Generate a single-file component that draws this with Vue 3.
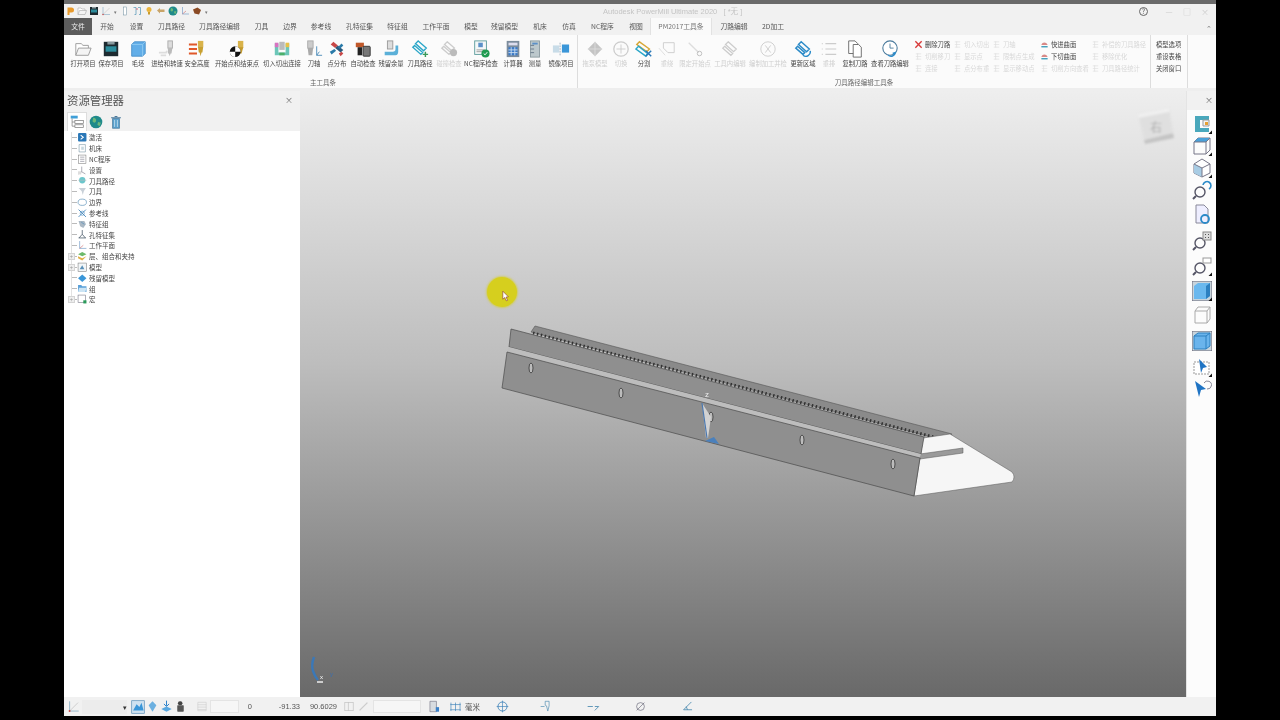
<script setup>
const corner = `<path d="M20 20v-3.5L16.5 20z" fill="#111"/>`;
const icons = {
  open: `<path d="M2 17V4h6l2 2h6v3" fill="#fff" stroke="#999"/><path d="M2 17l3-8h14l-3 8z" fill="#f4f4f4" stroke="#999"/>`,
  save: `<rect x="2" y="2" width="16" height="16" fill="#1d2a30"/><rect x="4" y="7" width="12" height="6" fill="#2c8c9c"/><rect x="6" y="2" width="8" height="3" fill="#8a9a9f"/>`,
  stock: `<path d="M3 5l3-3h12v13l-3 3H3z" fill="#62aee8" stroke="#4a90c8"/><path d="M3 5h12v13M15 5l3-3" fill="none" stroke="#8cc8f0"/>`,
  feed: `<rect x="11" y="1" width="5" height="8" fill="#ddd" stroke="#aaa"/><path d="M11 9h5l-1 6h-1l-1 3-1-3h-1z" fill="#bbb"/><path d="M1 14h8l1-2M3 17h6" stroke="#ddd" stroke-width="2" fill="none"/>`,
  rapid: `<rect x="11" y="1" width="6" height="6" fill="#d9b34a"/><path d="M11 7h6l-1 7h-1l-1 4-1-4h-1z" fill="#c8a030"/><path d="M1 5h9M1 10h9M1 15h9" stroke="#e0582a" stroke-width="2"/>`,
  start: `<rect x="11" y="1" width="6" height="8" fill="#d9b34a"/><path d="M11 8h6l-2 7h-2z" fill="#c49a2c"/><circle cx="8" cy="13" r="6" fill="#111"/><path d="M8 7a6 6 0 0 1 6 6H8zM8 13v6a6 6 0 0 1-6-6z" fill="#fff"/>`,
  lead: `<path d="M2 4h4v10h8V4h4v13H2z" fill="#6cc6b8"/><path d="M2 3h4v5H2z" fill="#d873c0"/><path d="M14 3h4v5h-4z" fill="#e8c048"/><rect x="7" y="2" width="6" height="9" fill="#bbb"/><path d="M7 14h6v3H7z" fill="#4caf6a"/>`,
  axis: `<rect x="3" y="1" width="6" height="8" fill="#ccc" stroke="#aaa"/><path d="M3 9h6l-1 8H4z" fill="#aaa"/><path d="M13 7v10h6M13 17l3-4" stroke="#4a8ab8" fill="none"/>`,
  dots: `<path d="M3 5l3-3 5 4-3 3z" fill="#c84848"/><path d="M8 9l3-3 6 5-3 3z" fill="#2c5a7c"/><path d="M2 13l5-3 2 2-5 4z" fill="#2a7aa8"/><path d="M11 8l4-4 2 2-4 4z" fill="#2a7aa8"/><path d="M12 15l3-2 2 2-3 3z" fill="#c84848"/>`,
  check: `<rect x="2" y="3" width="9" height="5" fill="#c0582a"/><path d="M4 8h5v9H4z" fill="#222"/><rect x="10" y="7" width="8" height="11" rx="1" fill="#777" stroke="#333"/>`,
  stockleft: `<path d="M3 13h9c2 0 3-1 3-3V6h3v7c0 2-1 4-3 4H3z" fill="#5bb0d8"/><rect x="6" y="1" width="6" height="9" fill="#ddd" stroke="#999"/>`,
  path: `<path d="M8 1l9 8-3 3-9-8zM4 6l9 8-2 2-9-8z" fill="none" stroke="#2aa6c8" stroke-width="1.5"/><path d="M16 13v6M13 16h6" stroke="#3a9a5a" stroke-width="1.6"/>`,
  coll: `<path d="M8 2l8 7-3 3-8-7zM4 7l8 7-2 2-8-7z" fill="none" stroke="#ccc" stroke-width="1.5"/><circle cx="15" cy="14" r="4" fill="#bbb"/>`,
  nc: `<rect x="3" y="1" width="13" height="15" fill="#f4f8f8" stroke="#5a9a9a"/><rect x="7" y="3" width="5" height="5" fill="#5a90c8"/><path d="M5 11h9M5 13h7" stroke="#999"/><circle cx="15" cy="15" r="4.5" fill="#1f9a50"/><path d="M13 15l1.5 1.5 2.5-3" stroke="#fff" fill="none"/>`,
  calc: `<rect x="3" y="1" width="14" height="18" fill="#7c8c9c"/><rect x="5" y="3" width="10" height="3" fill="#dde"/><path d="M5 8h10v9H5z" fill="#3a7ac8"/><path d="M8 8v9M12 8v9M5 11h10M5 14h10" stroke="#cde"/>`,
  measure: `<rect x="5" y="1" width="10" height="18" fill="#bcc8cc" stroke="#8a9a9f"/><path d="M5 6h4M5 10h4M5 14h4" stroke="#678"/><rect x="7" y="3" width="6" height="2" fill="#5a90c8"/>`,
  mirror: `<rect x="1" y="6" width="7" height="8" fill="#c8dce8"/><rect x="11" y="5" width="8" height="9" fill="#3a96d8"/><path d="M9 3v14" stroke="#9ab" stroke-dasharray="2 1"/>`,
  drag: `<path d="M10 2l8 8-8 8-8-8z" fill="#c4c4c4"/><path d="M10 2v16M2 10h16" stroke="#ddd"/>`,
  toggle: `<circle cx="10" cy="10" r="8" fill="none" stroke="#ccc" stroke-width="1.4"/><path d="M10 5v10M5 10h10" stroke="#ccc"/>`,
  split: `<path d="M5 2l11 8-3 3L2 5z" fill="none" stroke="#d8a838" stroke-width="1.6"/><path d="M4 7l10 8-2 3L1 10z" fill="none" stroke="#2aa6c8" stroke-width="1.6"/><path d="M12 12l6 6M18 12l-6 6" stroke="#2a78b8" stroke-width="1.6"/>`,
  rewind: `<path d="M6 3h12v11H11l-5-5z" fill="none" stroke="#ccc"/><path d="M1 9l7 8" stroke="#ddd"/>`,
  limit: `<path d="M3 3l11 11" stroke="#ddd" stroke-width="1.5"/><circle cx="15" cy="15" r="2.5" fill="none" stroke="#bbb"/>`,
  inner: `<path d="M8 2l9 8-3 3-9-8zM4 7l9 8-2 2-9-8z" fill="none" stroke="#ccc" stroke-width="1.4"/>`,
  batch: `<circle cx="10" cy="10" r="8" fill="none" stroke="#ccc"/><path d="M7 6l6 8M13 6l-6 8" stroke="#ccc"/>`,
  update: `<path d="M8 2l9 8-3 3-9-8zM4 7l8 7-2 2-8-7z" fill="none" stroke="#2a8ac8" stroke-width="1.6"/><path d="M10 17a5 5 0 0 0 8-5" stroke="#2a8ac8" stroke-width="1.6" fill="none"/>`,
  reorder: `<path d="M2 4h1M6 4h12M2 10h1M6 10h12M2 16h1M6 16h12" stroke="#ccc" stroke-width="1.3"/>`,
  copy: `<path d="M3 1h7l3 3v11H3z" fill="#fff" stroke="#666"/><path d="M8 5h6l3 3v11H8z" fill="#fff" stroke="#666"/>`,
  view: `<circle cx="10" cy="9" r="8" fill="#fff" stroke="#4a7a9c" stroke-width="1.2"/><path d="M10 4v5h4" stroke="#4a7a9c" fill="none"/><path d="M8 17a5 5 0 0 0 8-3l-3 1" stroke="#2a8ac8" stroke-width="1.6" fill="none"/>`,
  redx: `<path d="M3 3l14 14M17 3L3 17" stroke="#d83a3a" stroke-width="3"/>`,
  faint: `<path d="M4 4h12M4 10h12M4 16h12M8 3v14" fill="none" stroke="#ddd" stroke-width="1.4"/>`,
  surf: `<path d="M3 11c3-7 10-7 14 0z" fill="#d88a88"/><path d="M3 15h14" stroke="#3a9ab8" stroke-width="3"/>`,
  tree: `<rect x="1" y="1" width="10" height="4" fill="#3f9fd8"/><rect x="7" y="8" width="12" height="4" fill="#fff" stroke="#777"/><rect x="7" y="14" width="12" height="4" fill="#fff" stroke="#777"/><path d="M3 5v11h4M3 10h4" stroke="#777" fill="none"/>`,
  globe: `<circle cx="10" cy="10" r="9" fill="#1f8a8a"/><path d="M6 4c3 0 5 2 4 5s-4 2-5 0M13 10l4 1-2 5-3-2z" fill="#6cb87a"/>`,
  trash: `<path d="M5 5h10v14H5z" fill="#5aa0cc" stroke="#4a7a9c"/><path d="M3 4h14M8 2h4" stroke="#4a7a9c" stroke-width="1.5"/><path d="M8 7v10M12 7v10" stroke="#d8ecf8"/>`,
  activate: `<rect x="2" y="2" width="16" height="16" rx="2" fill="#2a78b8"/><path d="M7 6l5 4-5 4" stroke="#fff" stroke-width="2" fill="none"/>`,
  machine: `<path d="M4 3h12v14H4z" fill="#fff" stroke="#6a8a9c"/><path d="M8 7h5v6H8z" fill="#c8d8e0"/>`,
  ncdoc: `<rect x="3" y="2" width="14" height="16" fill="#fff" stroke="#777"/><path d="M6 6h8M6 10h8M6 14h8" stroke="#667"/>`,
  setup: `<path d="M9 3v10l7 4M9 13L3 17" stroke="#667" fill="none"/><rect x="2" y="12" width="6" height="6" fill="#ddd"/>`,
  tp: `<circle cx="10" cy="10" r="6" fill="#6cc6cc"/><path d="M2 10h16" stroke="#bbb"/>`,
  tool: `<path d="M3 4h14l-4 6-2 7-2-7z" fill="#c8d0d8"/>`,
  bound: `<ellipse cx="10" cy="10" rx="8" ry="6" fill="#fff" stroke="#5a90b8" stroke-width="1.3"/>`,
  ref: `<path d="M3 3l14 14M17 3L3 17" stroke="#3a80b8" stroke-width="1.6"/><circle cx="10" cy="10" r="4" fill="none" stroke="#3a80b8"/>`,
  feat: `<path d="M3 4h11l3 6-5 7-6-3z" fill="#aab8c4"/><path d="M8 6l6 4" stroke="#3a80b8"/>`,
  hole: `<path d="M10 2v8M3 17h14M4 17l6-7 6 7" stroke="#4a5a6a" stroke-width="1.5" fill="none"/>`,
  plane: `<path d="M5 2v14h13" stroke="#4a80b8" fill="none"/><path d="M5 16l7-6" stroke="#c85050"/>`,
  layer: `<path d="M10 2l8 4-8 4-8-4z" fill="#6cba6a"/><path d="M2 10l8 4 8-4-8 8-8-4z" fill="#e0b048"/>`,
  model: `<rect x="2" y="2" width="16" height="16" fill="#f2f6f8" stroke="#777"/><path d="M5 14l5-8 4 8z" fill="#5a90b8"/>`,
  rest: `<path d="M10 3l8 7-8 7-8-7z" fill="#3a96d8"/>`,
  group: `<path d="M2 4h6l2 2h8v11H2z" fill="#5aa0d8"/><path d="M4 9h14l-2 8H2z" fill="#cce4f4"/>`,
  macro: `<rect x="2" y="2" width="14" height="14" fill="#fff" stroke="#667"/><rect x="12" y="12" width="6" height="6" fill="#2a9a5a"/>`,
  wp: `<path d="M4 2v15h14" stroke="#6a9ab8" fill="none"/><path d="M4 17L17 4" stroke="#bbb"/><circle cx="4" cy="17" r="1.5" fill="#c84848"/>`,
  shade: `<rect x="1" y="1" width="18" height="18" fill="#cfe2f0" stroke="#5a90b8"/><path d="M3 15l5-9 4 4 3-6 3 11z" fill="#3a96d8"/>`,
  cut: `<path d="M10 2l6 6-6 10-6-10z" fill="#6cb0e0"/>`,
  drop: `<path d="M10 1v8M6 6l4 4 4-4" stroke="#2a80c8" fill="none" stroke-width="1.5"/><path d="M2 14l8-4 8 4-8 4z" fill="#5aa8e0"/>`,
  bolt: `<rect x="6" y="2" width="7" height="6" rx="3" fill="#444"/><rect x="5" y="8" width="10" height="10" rx="1" fill="#555"/>`,
  listfaint: `<path d="M3 3h14v14H3zM3 7h14M3 11h14M3 15h14" stroke="#ccc" fill="none"/>`,
  boxfaint: `<rect x="3" y="3" width="14" height="14" fill="none" stroke="#bbb"/><path d="M9 3v14" stroke="#bbb"/>`,
  pen: `<path d="M4 16L16 4" stroke="#ccc" stroke-width="2"/>`,
  doc: `<path d="M3 2h10v16H3z" fill="#d8dce0" stroke="#778"/><path d="M12 11h5v7h-5z" fill="#3a80c8"/>`,
  grid: `<path d="M2 7h16M2 15h16M3 4v13M10 4v13M17 4v13" stroke="#3a80b8" fill="none"/>`,
  target: `<circle cx="10" cy="10" r="7" fill="none" stroke="#3a80b8" stroke-width="1.3"/><path d="M10 1v18M1 10h18" stroke="#3a80b8"/>`,
  ntool: `<path d="M8 2h6v7l-2 8-2-8-2-1zM1 10h6" stroke="#4a8ab0" fill="none"/>`,
  radius: `<path d="M1 10h8M12 10h6l-6 6" stroke="#4a8ab0" fill="none" stroke-width="1.3"/>`,
  dia: `<circle cx="10" cy="10" r="6" fill="none" stroke="#667"/><path d="M4 16L16 4" stroke="#667"/>`,
  angle: `<path d="M16 3L4 15h13M10 15l-2-5" stroke="#4a8ab0" fill="none" stroke-width="1.3"/>`,
  // right hand toolbar
  frame: `<path d="M3 2h14v4H8v8h9v4H3z" fill="#4aa8bc"/><path d="M11 6h6v6h-6z" fill="#f4f4f4" stroke="#999"/><path d="M13 8h3v3h-3z" fill="#e8a030"/>${corner}`,
  topview: `<path d="M2 6l4-4h12v12l-4 4H2z" fill="none" stroke="#778"/><path d="M2 6l4-4h12l-4 4z" fill="#4aa0d8"/><path d="M2 6h12v12M14 6l4-4" fill="none" stroke="#778"/>${corner}`,
  iso: `<path d="M10 1l8 5v9l-8 4-8-4V6z" fill="#fff" stroke="#778"/><path d="M2 6l8 4v9l-8-4z" fill="#a8cce4"/><path d="M2 6l8 4 8-4M10 10v9" fill="none" stroke="#778"/>${corner}`,
  zoomfit: `<circle cx="8" cy="12" r="5" fill="none" stroke="#556" stroke-width="1.4"/><path d="M4 16l-3 3" stroke="#556" stroke-width="2"/><path d="M11 5a4 4 0 1 1 6 4" stroke="#2a8ac8" stroke-width="1.6" fill="none"/>`,
  docref: `<path d="M4 1h8l4 4v14H4z" fill="#eef" stroke="#889"/><circle cx="13" cy="15" r="4" fill="none" stroke="#2a8ac8" stroke-width="1.8"/>`,
  zoomgrid: `<circle cx="8" cy="12" r="5" fill="none" stroke="#556" stroke-width="1.4"/><path d="M4 16l-3 3" stroke="#556" stroke-width="2"/><rect x="11" y="1" width="8" height="8" fill="#ddd" stroke="#888"/><path d="M13 3h1v1h-1zM16 3h1v1h-1zM13 6h1v1h-1zM16 6h1v1h-1z" fill="#555"/>`,
  zoombox: `<circle cx="8" cy="12" r="5" fill="none" stroke="#556" stroke-width="1.4"/><path d="M4 16l-3 3" stroke="#556" stroke-width="2"/><rect x="11" y="2" width="8" height="5" fill="#fff" stroke="#999"/>${corner}`,
  solid: `<rect x="0" y="0" width="20" height="20" fill="#c8d4dc" stroke="#667"/><path d="M2 5l4-3h12v13l-4 3H2z" fill="#6ab8ee"/><path d="M14 5l4-3v13l-4 3z" fill="#2c80c0"/>${corner}`,
  wire2: `<path d="M3 6l3-4h12v12l-3 4H3z" fill="none" stroke="#aaa"/><path d="M3 6h12v12M15 6l3-4" fill="none" stroke="#aaa"/>`,
  trans: `<rect x="0" y="0" width="20" height="20" fill="#c8d4dc" stroke="#667"/><path d="M2 5l4-3h12v13l-4 3H2z" fill="#6ab4ec" stroke="#2c80c0"/><path d="M2 5h12v13M14 5l4-3" stroke="#2c80c0" fill="none"/>`,
  selbox: `<rect x="2" y="5" width="15" height="12" fill="#fff" stroke="#999" stroke-dasharray="2 1"/><path d="M7 2l8 8-4 1-2 5z" fill="#1f74c4"/>${corner}`,
  selundo: `<path d="M3 3l11 8-5 1-2 7z" fill="#1f74c4"/><path d="M12 5a4 4 0 1 1 3 6" stroke="#889" fill="none"/>`,
  // quick access only
  bulb: `<circle cx="10" cy="7" r="5" fill="#eab43c"/><rect x="8" y="12" width="4" height="5" fill="#c89a2c"/>`,
  undo: `<path d="M2 9l6-5v3h9v5H8v3z" fill="#c8a468"/>`,
  brown: `<path d="M2 7l9-4 7 5-4 9-9-2z" fill="#8a4a24"/>`,
  thin: `<rect x="7" y="2" width="6" height="16" fill="#fff" stroke="#6a8a9c"/>`,
  twin: `<path d="M3 3h5v14H5M12 3h5v14h-3" stroke="#5a9ab8" stroke-width="1.5" fill="none"/><path d="M8 6h4" stroke="#d06a7a" stroke-width="2"/>`,
};
const quick = ["open", "save", "wp", "dot", "thin", "twin", "bulb", "undo", "globe", "plane", "brown", "dot"];
const tabs = [
  ["文件", 28], ["开始", 30], ["设置", 29], ["刀具路径", 41], ["刀具路径编辑", 55], ["刀具", 29], ["边界", 28],
  ["参考线", 34], ["孔特征集", 43], ["特征组", 33], ["工作平面", 44], ["模型", 26], ["残留模型", 41],
  ["机床", 30], ["仿真", 28], ["NC程序", 39], ["视图", 28], ["PM2017工具条", 62], ["刀路编辑", 44], ["2D加工", 34],
];
const mainTools = [
  ["open", "打开项目", 28], ["save", "保存项目", 28], ["stock", "毛坯", 26], ["feed", "进给和转速", 32],
  ["rapid", "安全高度", 28], ["start", "开始点和结束点", 52], ["lead", "切入切出连接", 38], ["axis", "刀轴", 26],
  ["dots", "点分布", 20], ["check", "自动检查", 32], ["stockleft", "残留余量", 24], ["path", "刀具路径", 34],
  ["coll", "碰撞检查", 24, true], ["nc", "NC程序检查", 40], ["calc", "计算器", 24], ["measure", "测量", 20], ["mirror", "镜像项目", 32],
];
const editTools = [
  ["drag", "拖泵模型", 34, true], ["toggle", "切换", 18, true], ["split", "分割", 28], ["rewind", "重绕", 18, true], ["limit", "限定开始点", 38, true],
  ["inner", "工具内编辑", 32, true], ["batch", "编制加工并检", 44, true], ["update", "更新区域", 26], ["reorder", "重排", 26, true],
  ["copy", "复制刀路", 26], ["view", "查看刀路编辑", 44],
];
const smallTools = [
  ["redx", "删除刀路"], ["faint", "切入切出", true], ["faint", "刀轴", true], ["surf", "快进曲面"], ["faint", "补偿的刀具路径", true],
  ["faint", "切削移刀", true], ["faint", "显示点", true], ["faint", "限制点生成", true], ["surf", "下切曲面"], ["faint", "移除优化", true],
  ["faint", "连接", true], ["faint", "点分布重", true], ["faint", "显示移动点", true], ["faint", "切削方向查看", true], ["faint", "刀具路径统计", true],
];
const extras = ["模型选项", "重设表格", "关闭窗口"];
const treeRows = [
  ["activate", "激活"], ["machine", "机床"], ["ncdoc", "NC程序"], ["setup", "设置"], ["tp", "刀具路径"], ["tool", "刀具"],
  ["bound", "边界"], ["ref", "参考线"], ["feat", "特征组"], ["hole", "孔特征集"], ["plane", "工作平面"],
  ["layer", "层、组合和夹持", true], ["model", "模型", true], ["rest", "残留模型"], ["group", "组"], ["macro", "宏", true],
];
const sideIcons = [
  ["frame", 0], ["topview", 22], ["iso", 22], ["zoomfit", 22], ["docref", 24], ["zoomgrid", 27], ["zoombox", 25],
  ["solid", 25], ["wire2", 24], ["trans", 26], ["selbox", 26], ["selundo", 21],
];
// status bar, left to right: kind, value, width
const statusItems = [
  ["i", "wp", 18], ["combo", "", 45], ["s", "", 4], ["i", "shade", 14, true], ["i", "cut", 14], ["i", "drop", 14], ["i", "bolt", 14],
  ["s", "", 9], ["i", "listfaint", 12], ["s", "", 2], ["box", "", 29], ["t", "0", 13], ["t", "-91.33", 48], ["t", "90.6029", 37],
  ["s", "", 6], ["i", "boxfaint", 12], ["s", "", 2], ["i", "pen", 13], ["s", "", 3], ["box", "", 48], ["s", "", 6],
  ["i", "doc", 14], ["s", "", 7], ["i", "grid", 14], ["t", "毫米", 18], ["s", "", 15], ["i", "target", 14],
  ["s", "", 30], ["i", "ntool", 14], ["s", "", 33], ["i", "radius", 14], ["s", "", 33], ["i", "dia", 14], ["s", "", 33], ["i", "angle", 14],
];
const holes = [[531, 368], [621, 393], [711, 417], [802, 440], [893, 464]];
</script>

<template>
  <div class="stage">
    <div class="window">
      <div class="titlebar">
        <div class="quick">
          <svg class="qi" viewBox="0 0 20 20"><path d="M5 3h8a5 5 0 0 1 0 10H9v5H5z" fill="#e89a2c" /></svg>
          <template v-for="(q, i) in quick" :key="i">
            <span v-if="q === 'dot'" class="qdot">▾</span>
            <svg v-else class="qi" viewBox="0 0 20 20" v-html="icons[q]"></svg>
          </template>
        </div>
        <div class="apptitle">Autodesk PowerMill Ultimate 2020 &nbsp; [ *无 ]</div>
        <div class="winbtns">
          <span class="help">?</span><span class="wb">—</span><span class="wb">□</span><span class="wb">×</span>
        </div>
      </div>

      <div class="tabs">
        <div
          v-for="(t, i) in tabs"
          :key="t[0]"
          class="tab"
          :class="{ file: i === 0, active: t[0] === 'PM2017工具条' }"
          :style="{ width: t[1] + 'px' }"
        >{{ t[0] }}</div>
        <span class="collapse">⌃</span>
      </div>

      <div class="ribbon">
        <div class="group main-group">
          <div class="tools">
            <div v-for="t in mainTools" :key="t[1]" class="tool" :class="{ off: t[3] }" :style="{ width: t[2] + 'px' }">
              <svg class="bigicon" viewBox="0 0 20 20" v-html="icons[t[0]]"></svg>
              <span>{{ t[1] }}</span>
            </div>
          </div>
          <div class="grouplabel">主工具条</div>
        </div>
        <div class="group edit-group">
          <div class="tools">
            <div v-for="t in editTools" :key="t[1]" class="tool" :class="{ off: t[3] }" :style="{ width: t[2] + 'px' }">
              <svg class="bigicon" viewBox="0 0 20 20" v-html="icons[t[0]]"></svg>
              <span>{{ t[1] }}</span>
            </div>
            <div class="smallgrid">
              <div v-for="s in smallTools" :key="s[1]" class="small" :class="{ off: s[2] }">
                <svg class="smallicon" viewBox="0 0 20 20" v-html="icons[s[0]]"></svg>
                <span>{{ s[1] }}</span>
              </div>
            </div>
          </div>
          <div class="grouplabel">刀具路径编辑工具条</div>
        </div>
        <div class="group extra-group">
          <div v-for="e in extras" :key="e" class="extra">{{ e }}</div>
        </div>
      </div>

      <div class="workarea">
        <aside class="explorer">
          <div class="panelhead">
            <span class="paneltitle">资源管理器</span>
            <span class="close">×</span>
          </div>
          <div class="paneltabs">
            <div class="ptab on"><svg viewBox="0 0 20 20" v-html="icons.tree"></svg></div>
            <div class="ptab"><svg viewBox="0 0 20 20" v-html="icons.globe"></svg></div>
            <div class="ptab"><svg viewBox="0 0 20 20" v-html="icons.trash"></svg></div>
          </div>
          <ul class="tree">
            <li v-for="(r, i) in treeRows" :key="r[1]" class="row">
              <span class="branch" :class="{ last: i === treeRows.length - 1 }">
                <i v-if="r[2]" class="plus">+</i>
              </span>
              <svg class="rowicon" viewBox="0 0 20 20" v-html="icons[r[0]]"></svg>
              <span class="rowlabel">{{ r[1] }}</span>
            </li>
          </ul>
        </aside>

        <main class="viewport">
          <svg class="scene" viewBox="300 91 886 606">
            <!-- view cube -->
            <g class="cube">
              <path d="M1144 140l29-7 1 5-29 6z" fill="#c4c4c4" />
              <path d="M1138 114l31-6 4 25-29 7z" fill="#dfdfdf" />
              <path d="M1138 114l31-6 .6 4-31 6z" fill="#efefef" />
              <text x="1150" y="132" class="cubetext">右</text>
            </g>
            <!-- rail on top -->
            <path d="M535 326L952 434 947 441 531 332z" fill="#8a8a8a" stroke="#555" stroke-width=".6" />
            <path d="M533 333L945 440" stroke="#333" stroke-width="3" stroke-dasharray="1.5 2.5" fill="none" />
            <!-- white end -->
            <path d="M923 438L950 434 1012 472Q1016 477 1012 482L914 496 920 458z" fill="#f6f6f6" stroke="#555" stroke-width=".5" />
            <path d="M920 454L963 448 963 453 920 459z" fill="#9a9a9a" stroke="#555" stroke-width=".5" />
            <!-- upper face -->
            <path d="M511 329L924 437 921 454 509 347z" fill="#8f8f8f" stroke="#4a4a4a" stroke-width=".7" />
            <!-- light strip -->
            <path d="M509 347L921 454 920 458 507 352z" fill="#bdbdbd" />
            <!-- lower face -->
            <path d="M507 352L920 458 914 496 502 388z" fill="#8f8f8f" stroke="#4a4a4a" stroke-width=".7" />
            <ellipse v-for="h in holes" :key="h[0]" :cx="h[0]" :cy="h[1]" rx="2" ry="5" fill="#bcbcbc" stroke="#333" stroke-width=".8" />
            <!-- tool triad -->
            <path d="M702 403L711 417 708 438 706 438z" fill="#d2d2d2" />
            <path d="M702 403L707 438" stroke="#4a78b0" stroke-width="1.2" />
            <path d="M705 441L714 437 719 444z" fill="#4a80bc" />
            <text x="705" y="397" class="ztext">z</text>
            <!-- small axes -->
            <path d="M314 657Q311 665 313 671T318 680" stroke="#3a78b8" stroke-width="2.4" fill="none" />
            <path d="M317 682h6" stroke="#eee" stroke-width="1.5" />
            <text x="320" y="679" class="xtext">x</text>
            <text x="330" y="676" class="ytext">y</text>
          </svg>
          <div class="spot"></div>
          <svg class="pointer" viewBox="0 0 10 14"><path d="M1 1l7 7-3 .4 2 4-1.6.6-2-4L1 11z" fill="#fff" stroke="#8a4030" stroke-width=".8" /></svg>
        </main>

        <aside class="sidebar">
          <div class="sidehead"><span class="close">×</span></div>
          <div class="sideicons">
            <svg v-for="s in sideIcons" :key="s[0]" class="sideicon" :style="{ marginTop: s[1] - 20 + 'px' }" viewBox="0 0 20 20" v-html="icons[s[0]]"></svg>
          </div>
        </aside>
      </div>

      <footer class="status">
        <template v-for="(s, i) in statusItems" :key="i">
          <div v-if="s[0] === 's'" :style="{ width: s[2] + 'px' }"></div>
          <div v-else-if="s[0] === 'i'" class="sticon" :class="{ sel: s[3] }" :style="{ width: s[2] + 'px' }">
            <svg viewBox="0 0 20 20" v-html="icons[s[1]]"></svg>
          </div>
          <div v-else-if="s[0] === 'combo'" class="combo" :style="{ width: s[2] + 'px' }"><span>▾</span></div>
          <div v-else-if="s[0] === 'box'" class="stbox" :style="{ width: s[2] + 'px' }"></div>
          <div v-else class="sttext" :style="{ width: s[2] + 'px' }">{{ s[1] }}</div>
        </template>
      </footer>
    </div>
  </div>
</template>

<style>
html, body { margin: 0; background: #000; overflow: hidden; }
</style>

<style scoped>
.stage {
  width: 1280px;
  height: 720px;
  background: #000;
  padding: 0 64px 4px;
  box-sizing: border-box;
  font-family: "Noto Sans CJK SC", "Noto Sans", sans-serif;
}

.window {
  height: 716px;
  width: 1152px;
  display: flex;
  flex-direction: column;
  background: #f1f1f1;
  border-top: 4px solid #6a6a6a;
  box-sizing: border-box;
  filter: blur(0.45px);
  color: #444;
}

/* title bar */
.titlebar {
  height: 14px;
  display: flex;
  align-items: center;
  position: relative;
  padding-left: 1px;
}
.quick { display: flex; gap: 2px; align-items: center; width: 180px; }
.qi { width: 10px; height: 10px; flex: none; }
.qdot { font-size: 5px; color: #777; width: 5px; text-align: center; }
.apptitle {
  position: absolute;
  left: 539px;
  top: 1px;
  font-size: 7.5px;
  color: #c4c4c4;
  white-space: nowrap;
  font-family: "Liberation Sans", "Noto Sans CJK SC", sans-serif;
}
.winbtns {
  margin-left: auto;
  display: flex;
  align-items: center;
  font-size: 8px;
  color: #ccc;
  padding-right: 2px;
}
.help {
  width: 9px;
  height: 9px;
  border: 1px solid #666;
  border-radius: 50%;
  box-sizing: border-box;
  font-size: 7px;
  line-height: 7px;
  text-align: center;
  color: #555;
  margin-right: 12px;
}
.wb { width: 18px; text-align: center; }

/* tabs */
.tabs {
  height: 17px;
  display: flex;
  align-items: stretch;
  position: relative;
}
.tab {
  font-size: 6.8px;
  line-height: 17px;
  text-align: center;
  color: #555;
  white-space: nowrap;
  flex: none;
}
.tab.file { background: #5c5c5c; color: #eee; }
.tab.active {
  background: #fafafa;
  color: #777;
  box-shadow: inset 1px 0 #e2e2e2, inset -1px 0 #e2e2e2;
}
.collapse { position: absolute; right: 4px; top: 5px; font-size: 7px; color: #777; }

/* ribbon */
.ribbon {
  height: 53px;
  display: flex;
  background: #fbfbfb;
  border-bottom: 3px solid #eeeeee;
}
.group {
  display: flex;
  flex-direction: column;
  box-sizing: border-box;
  border-right: 1px solid #ddd;
  padding-top: 5px;
}
.main-group { width: 514px; padding-left: 5px; }
.edit-group { width: 573px; padding-left: 0; }
.extra-group { width: 37px; padding: 5px 0 0 5px; gap: 2.8px; }
.tools { display: flex; height: 36px; }
.tool {
  flex: none;
  display: flex;
  flex-direction: column;
  align-items: center;
  font-size: 6.3px;
  line-height: 9px;
  white-space: nowrap;
  color: #444;
}
.tool.off { color: #cfcfcf; }
.bigicon { width: 18px; height: 18px; margin-bottom: 1px; flex: none; }
.grouplabel {
  margin-top: 1px;
  text-align: center;
  font-size: 6.5px;
  color: #666;
}
.smallgrid {
  display: grid;
  grid-template-columns: 39px 39px 48px 51px 60px;
  grid-auto-rows: 12px;
  margin: -2px 0 0 2px;
}
.small {
  display: flex;
  align-items: center;
  gap: 2px;
  font-size: 6.3px;
  white-space: nowrap;
  color: #444;
  overflow: hidden;
}
.small.off { color: #d8d8d8; }
.smallicon { width: 9px; height: 9px; flex: none; }
.extra { font-size: 6.3px; line-height: 9.4px; color: #444; white-space: nowrap; }

/* main area */
.workarea { flex: 1; display: flex; min-height: 0; }

.explorer {
  width: 236px;
  flex: none;
  display: flex;
  flex-direction: column;
  background: #fff;
}
.panelhead {
  height: 19px;
  background: #f1f1f1;
  display: flex;
  align-items: center;
  justify-content: space-between;
  padding: 0 7px 2px 3px;
  box-sizing: border-box;
}
.paneltitle { font-size: 11.4px; color: #555; }
.close { font-size: 8px; color: #666; }
.paneltabs {
  height: 21px;
  background: #f1f1f1;
  display: flex;
  padding: 2px 0 0 3px;
  box-sizing: border-box;
}
.ptab { width: 19.5px; display: flex; align-items: center; justify-content: center; }
.ptab.on { background: #fff; box-shadow: inset 0 1px #ddd, inset 1px 0 #ddd, inset -1px 0 #ddd; }
.ptab svg { width: 14px; height: 14px; }
.tree {
  list-style: none;
  margin: 0;
  padding: 1px 0 0;
}
.row {
  display: flex;
  align-items: center;
  height: 10.8px;
}
.branch {
  position: relative;
  width: 5px;
  height: 100%;
  margin-left: 7px;
  border-left: 1px solid #e2e2e2;
  flex: none;
}
.branch.last { height: 50%; align-self: flex-start; }
.branch::after {
  content: "";
  position: absolute;
  left: 0;
  right: 0;
  top: 5px;
  border-top: 1px solid #bbb;
}
.plus {
  position: absolute;
  left: -4px;
  top: 2px;
  width: 7px;
  height: 7px;
  background: #eee;
  border: 1px solid #d4d4d4;
  box-sizing: border-box;
  font-size: 6px;
  line-height: 5px;
  font-style: normal;
  text-align: center;
  color: #999;
  z-index: 1;
}
.rowicon { width: 10.5px; height: 10.5px; flex: none; }
.rowlabel { font-size: 6.5px; margin-left: 1.5px; color: #444; white-space: nowrap; }

/* 3d view */
.viewport {
  flex: 1;
  position: relative;
  background: linear-gradient(180deg, #eeeeee 0%, #bdbdbd 45%, #696969 100%);
  overflow: hidden;
}
.scene { position: absolute; inset: 0; width: 100%; height: 100%; }
.cube { filter: blur(1px); }
.cubetext { font-size: 12px; fill: #b0b0b0; font-family: "Noto Sans CJK SC", sans-serif; }
.ztext { font-size: 8px; fill: #eee; font-family: "Liberation Sans", sans-serif; }
.xtext { font-size: 6px; fill: #fff; font-family: "Liberation Sans", sans-serif; }
.ytext { font-size: 6px; fill: #3a6fb0; font-family: "Liberation Sans", sans-serif; }
.spot {
  position: absolute;
  left: 187px;
  top: 186px;
  width: 30px;
  height: 30px;
  border-radius: 50%;
  background: #d6cf1e;
  box-shadow: 0 0 2px 1px rgba(214, 207, 30, 0.6);
}
.pointer { position: absolute; left: 202px; top: 199px; width: 8px; height: 12px; }

.sidebar {
  width: 30px;
  flex: none;
  background: #fcfcfc;
  display: flex;
  flex-direction: column;
  border-left: 1px solid #e4e4e4;
  box-sizing: border-box;
}
.sidehead {
  height: 19px;
  background: #f1f1f1;
  display: flex;
  align-items: center;
  justify-content: flex-end;
  padding: 0 3px 2px 0;
  box-sizing: border-box;
}
.sideicons {
  display: flex;
  flex-direction: column;
  align-items: center;
  padding-top: 4px;
}
.sideicon { width: 20px; height: 20px; flex: none; }
.sideicon:first-child { margin-top: 0 !important; }

/* status bar */
.status {
  height: 19px;
  flex: none;
  display: flex;
  align-items: center;
  background: #f1f1f1;
  font-size: 7px;
}
.sticon { height: 14px; flex: none; display: flex; align-items: center; justify-content: center; }
.sticon svg { width: 13px; height: 13px; }
.sticon.sel svg { width: 14px; height: 14px; }
.combo {
  height: 14px;
  flex: none;
  background: #ececec;
  font-size: 7px;
  text-align: right;
  line-height: 14px;
  color: #333;
}
.stbox { height: 13px; flex: none; background: #f6f6f6; border: 1px solid #e4e4e4; box-sizing: border-box; }
.sttext {
  flex: none;
  font-family: "Liberation Sans", "Noto Sans CJK SC", sans-serif;
  font-size: 7.5px;
  text-align: right;
  color: #555;
  white-space: nowrap;
}
</style>
